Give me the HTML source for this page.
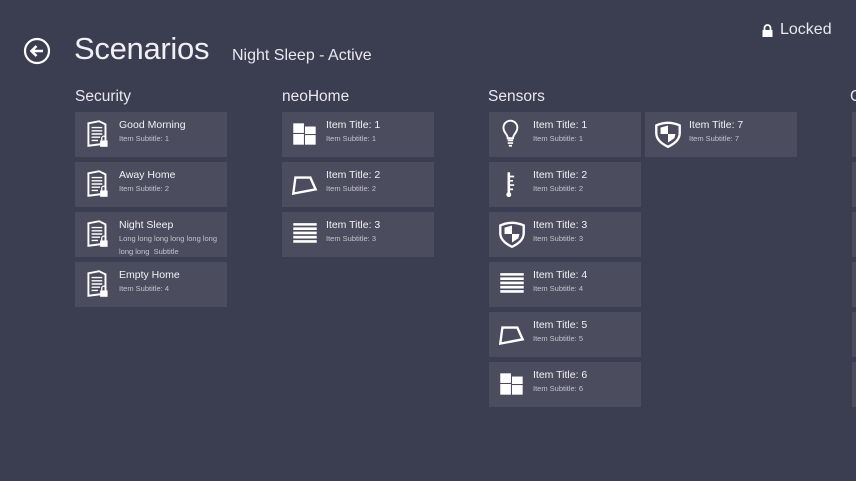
<!DOCTYPE html>
<html><head><meta charset="utf-8"><style>
*{margin:0;padding:0;box-sizing:border-box}
body{width:856px;height:481px;background:#3b3d50;font-family:"Liberation Sans",sans-serif;color:#fff;position:relative;overflow:hidden}
.a{position:absolute}
.t{position:absolute;width:152px;height:45px;background:#4b4d5f}
.t svg{position:absolute;left:7px;top:6px;width:32px;height:32px}
.t .h{position:absolute;left:44px;top:7px;font-size:10.5px;color:#f2f2f2;white-space:nowrap}
.t .s{position:absolute;left:44px;top:20px;font-size:7.5px;color:#c3c4cc;line-height:13px;width:106px}
.g{position:absolute;top:88px;font-size:15.5px;color:#e8e8ee}
</style></head><body>
<svg class="a" style="left:23px;top:37px" width="28" height="28" viewBox="0 0 28 28"><circle cx="14" cy="14" r="12" fill="none" stroke="#fff" stroke-width="2.2"/><path d="M20 14H9M13.5 9L8.5 14l5 5" fill="none" stroke="#fff" stroke-width="2.6"/></svg>
<div class="a" style="left:74px;top:31px;font-size:31px;color:#f0f0f4;letter-spacing:-0.3px">Scenarios</div>
<div class="a" style="left:232px;top:47px;font-size:16px;color:#e8e8ee">Night Sleep - Active</div>
<svg class="a" style="left:762px;top:24px" width="11" height="13" viewBox="0 0 11 13"><path d="M2.5 6V4a3 3 0 0 1 6 0v2" fill="none" stroke="#fff" stroke-width="1.8"/><rect x="0.5" y="6" width="10" height="7" fill="#fff"/></svg>
<div class="a" style="left:780px;top:21px;font-size:16px;color:#e8e8ee">Locked</div>

<div class="g" style="left:75px">Security</div>
<div class="g" style="left:282px">neoHome</div>
<div class="g" style="left:488px">Sensors</div>
<div class="g" style="left:850px">C</div>

<svg width="0" height="0" style="position:absolute"><defs>
<symbol id="doc" viewBox="0 0 30 30"><path d="M6 5L16 3L22 6V24L6 26Z" fill="none" stroke="#fff" stroke-width="1.8"/><path d="M9 9h10M9 12h10M9 15h10M9 18h8M9 21h6" stroke="#fff" stroke-width="1.3"/><rect x="17" y="21" width="7" height="6" fill="#fff"/><path d="M18.5 21v-2a2 2 0 0 1 4 0" fill="none" stroke="#fff" stroke-width="1.2"/></symbol>
<symbol id="win" viewBox="0 0 30 30"><rect x="4" y="5" width="10" height="9" fill="#fff"/><rect x="15" y="8" width="10" height="7" fill="#fff"/><rect x="4" y="15" width="10" height="10" fill="#fff"/><rect x="15" y="16" width="10" height="9" fill="#fff"/></symbol>
<symbol id="trap" viewBox="0 0 30 30"><path d="M6 9L20 9L25 20L4 24Z" fill="none" stroke="#fff" stroke-width="2.2"/></symbol>
<symbol id="lines" viewBox="0 0 30 30"><path d="M4 6h22M4 10h22M4 14h22M4 18h22M4 22h22" stroke="#fff" stroke-width="2.4"/></symbol>
<symbol id="bulb" viewBox="0 0 30 30"><path d="M11 19c0-4-4-5-4-10a6.5 6.5 0 0 1 13 0c0 5-4 6-4 10z" fill="none" stroke="#fff" stroke-width="1.8"/><path d="M11 21h5M11 23.5h5M12 26h3" stroke="#fff" stroke-width="1.6"/></symbol>
<symbol id="therm" viewBox="0 0 30 30"><path d="M12 4v20" stroke="#fff" stroke-width="2.4"/><circle cx="12" cy="25" r="2.3" fill="#fff"/><path d="M12 8h5M12 12h4M12 16h5M12 20h4" stroke="#fff" stroke-width="1.6"/></symbol>
<symbol id="shield" viewBox="0 0 30 30"><path d="M4 7Q15 2 26 7V14Q26 22 15 27Q4 22 4 14Z" fill="none" stroke="#fff" stroke-width="2.2"/><path d="M8 9L15 7V15H8Z M15 15H22L21 19L15 23Z" fill="#fff"/></symbol>
</defs></svg>

<div class="t" style="left:75px;top:112px"><svg><use href="#doc"/></svg><div class="h">Good Morning</div><div class="s">Item Subtitle: 1</div></div>
<div class="t" style="left:75px;top:162px"><svg><use href="#doc"/></svg><div class="h">Away Home</div><div class="s">Item Subtitle: 2</div></div>
<div class="t" style="left:75px;top:212px"><svg><use href="#doc"/></svg><div class="h">Night Sleep</div><div class="s">Long long long long long long long long&nbsp; Subtitle</div></div>
<div class="t" style="left:75px;top:262px"><svg><use href="#doc"/></svg><div class="h">Empty Home</div><div class="s">Item Subtitle: 4</div></div>

<div class="t" style="left:282px;top:112px"><svg><use href="#win"/></svg><div class="h">Item Title: 1</div><div class="s">Item Subtitle: 1</div></div>
<div class="t" style="left:282px;top:162px"><svg><use href="#trap"/></svg><div class="h">Item Title: 2</div><div class="s">Item Subtitle: 2</div></div>
<div class="t" style="left:282px;top:212px"><svg><use href="#lines"/></svg><div class="h">Item Title: 3</div><div class="s">Item Subtitle: 3</div></div>

<div class="t" style="left:489px;top:112px"><svg><use href="#bulb"/></svg><div class="h">Item Title: 1</div><div class="s">Item Subtitle: 1</div></div>
<div class="t" style="left:489px;top:162px"><svg><use href="#therm"/></svg><div class="h">Item Title: 2</div><div class="s">Item Subtitle: 2</div></div>
<div class="t" style="left:489px;top:212px"><svg><use href="#shield"/></svg><div class="h">Item Title: 3</div><div class="s">Item Subtitle: 3</div></div>
<div class="t" style="left:489px;top:262px"><svg><use href="#lines"/></svg><div class="h">Item Title: 4</div><div class="s">Item Subtitle: 4</div></div>
<div class="t" style="left:489px;top:312px"><svg><use href="#trap"/></svg><div class="h">Item Title: 5</div><div class="s">Item Subtitle: 5</div></div>
<div class="t" style="left:489px;top:362px"><svg><use href="#win"/></svg><div class="h">Item Title: 6</div><div class="s">Item Subtitle: 6</div></div>
<div class="t" style="left:645px;top:112px"><svg><use href="#shield"/></svg><div class="h">Item Title: 7</div><div class="s">Item Subtitle: 7</div></div>

<div class="t" style="left:852px;top:112px;width:10px"></div>
<div class="t" style="left:852px;top:162px;width:10px"></div>
<div class="t" style="left:852px;top:212px;width:10px"></div>
<div class="t" style="left:852px;top:262px;width:10px"></div>
<div class="t" style="left:852px;top:312px;width:10px"></div>
<div class="t" style="left:852px;top:362px;width:10px"></div>
</body></html>
